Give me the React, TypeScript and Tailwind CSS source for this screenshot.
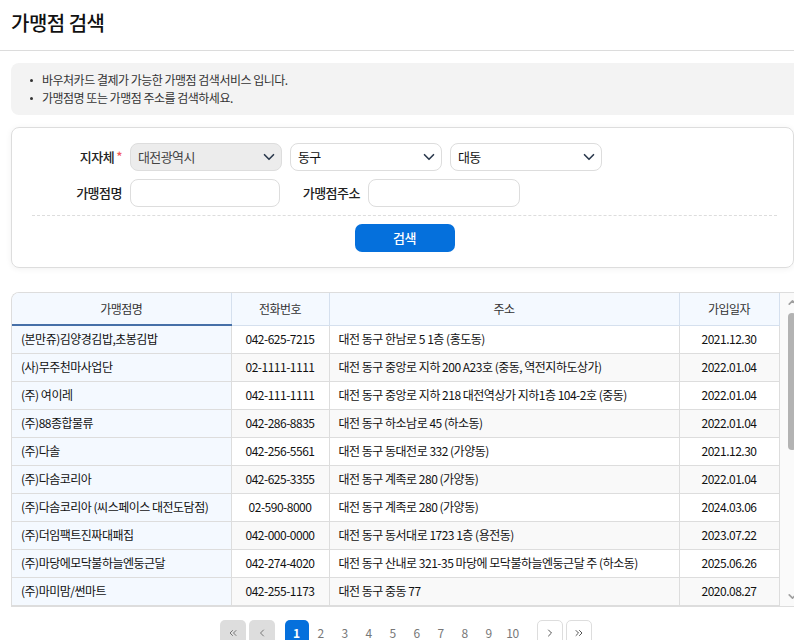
import { ChevronDown, ChevronLeft, ChevronRight, ChevronsLeft, ChevronsRight, ChevronUp } from "lucide-react";

const rows = [
  ["(본만쥬)김양경김밥,초봉김밥", "042-625-7215", "대전 동구 한남로 5 1층 (홍도동)", "2021.12.30"],
  ["(사)무주천마사업단", "02-1111-1111", "대전 동구 중앙로 지하 200 A23호 (중동, 역전지하도상가)", "2022.01.04"],
  ["(주) 여이레", "042-111-1111", "대전 동구 중앙로 지하 218 대전역상가 지하1층 104-2호 (중동)", "2022.01.04"],
  ["(주)88종합물류", "042-286-8835", "대전 동구 하소남로 45 (하소동)", "2022.01.04"],
  ["(주)다솔", "042-256-5561", "대전 동구 동대전로 332 (가양동)", "2021.12.30"],
  ["(주)다솜코리아", "042-625-3355", "대전 동구 계족로 280 (가양동)", "2022.01.04"],
  ["(주)다솜코리아 (씨스페이스 대전도담점)", "02-590-8000", "대전 동구 계족로 280 (가양동)", "2024.03.06"],
  ["(주)더임팩트진짜대패집", "042-000-0000", "대전 동구 동서대로 1723 1층 (용전동)", "2023.07.22"],
  ["(주)마당에모닥불하늘엔둥근달", "042-274-4020", "대전 동구 산내로 321-35 마당에 모닥불하늘엔둥근달 주 (하소동)", "2025.06.26"],
  ["(주)마미맘/썬마트", "042-255-1173", "대전 동구 중동 77", "2020.08.27"],
];

function Select({ label, disabled }: { label: string; disabled?: boolean }) {
  return (
    <div
      className={`w-[152px] h-[28px] flex items-center justify-between pl-[7px] pr-[3px] border border-[#dddddd] rounded-[8px] text-[13px] tracking-[-0.6px] ${
        disabled ? "bg-[#ececec] text-[#444444]" : "bg-white text-[#111111]"
      }`}
    >
      <span>{label}</span>
      <ChevronDown className="w-[18px] h-[18px] text-[#2b3a4d]" strokeWidth={2.2} />
    </div>
  );
}

function PageButton({ children, filled }: { children: React.ReactNode; filled?: boolean }) {
  return (
    <div
      className={`w-[26px] h-[26px] flex items-center justify-center rounded-[5px] ${
        filled ? "bg-[#dddddd] text-[#777777]" : "bg-white border border-[#dddddd] text-[#555555]"
      }`}
    >
      {children}
    </div>
  );
}

export default function App() {
  return (
    <div
      className="h-[640px] overflow-hidden bg-white text-[#111111]"
      style={{ fontFamily: '"Noto Sans CJK KR", "Noto Sans", sans-serif' }}
    >
      <header className="h-[51px] flex items-center pl-[11px] border-b border-[#dcdcdc]">
        <h1 className="text-[20px] font-medium leading-none pb-[4px] tracking-[-0.5px]">가맹점 검색</h1>
      </header>

      <div className="pl-[11px] pt-3">
        <ul className="h-[52px] flex flex-col justify-center pl-[19px] bg-[#f3f3f3] rounded-l-[8px] text-[12px] leading-[18px] tracking-[-0.5px] text-[#333333]">
          <li className="flex items-center gap-[9px]">
            <span className="w-[3px] h-[3px] rounded-full bg-[#333333]" />
            바우처카드 결제가 가능한 가맹점 검색서비스 입니다.
          </li>
          <li className="flex items-center gap-[9px]">
            <span className="w-[3px] h-[3px] rounded-full bg-[#333333]" />
            가맹점명 또는 가맹점 주소를 검색하세요.
          </li>
        </ul>

        <section className="mt-3 h-[141px] pt-[15px] pr-[16px] pl-[20px] border border-[#dddddd] rounded-[8px] shadow-[0_1px_6px_rgba(0,0,0,0.06)]">
          <div className="flex items-center">
            <label className="w-[90px] text-right text-[13px] font-medium tracking-[-0.5px] text-[#222222]">
              지자체<span className="text-[#f25c5c] ml-[2px]">*</span>
            </label>
            <div className="ml-[8px] flex gap-[8px]">
              <Select label="대전광역시" disabled />
              <Select label="동구" />
              <Select label="대동" />
            </div>
          </div>
          <div className="flex items-center mt-[8px]">
            <label className="w-[90px] text-right text-[13px] font-medium tracking-[-0.5px] text-[#222222]">가맹점명</label>
            <div className="ml-[8px] w-[150px] h-[28px] border border-[#dddddd] rounded-[8px]" />
            <label className="w-[80px] text-right text-[13px] font-medium tracking-[-0.5px] text-[#222222]">가맹점주소</label>
            <div className="ml-[8px] w-[152px] h-[28px] border border-[#dddddd] rounded-[8px]" />
          </div>
          <div className="mt-[8px] border-t border-dashed border-[#dddddd]" />
          <div className="mt-[8px] flex justify-center">
            <button type="button" className="w-[100px] h-[28px] rounded-[7px] bg-[#0570dc] text-white text-[13px] font-medium tracking-[-0.5px]">
              검색
            </button>
          </div>
        </section>

        <section className="mt-[24px] flex h-[315px] border-t border-b border-l border-[#dddddd] rounded-tl-[8px] overflow-hidden">
          <table className="w-[767px] table-fixed border-collapse text-[12px] tracking-[-0.5px] self-start">
            <colgroup>
              <col className="w-[219px]" />
              <col className="w-[98px]" />
              <col className="w-[350px]" />
              <col className="w-[100px]" />
            </colgroup>
            <thead>
              <tr className="h-[32px] bg-[#f4f9ff] text-[#333333] font-normal">
                <th className="font-normal border-b-2 border-b-[#4670a8]">가맹점명</th>
                <th className="font-normal border-l border-b border-[#d5e0ee]">전화번호</th>
                <th className="font-normal border-l border-b border-[#d5e0ee]">주소</th>
                <th className="font-normal border-l border-b border-r border-[#d5e0ee]">가입일자</th>
              </tr>
            </thead>
            <tbody>
              {rows.map((row, i) => (
                <tr key={row[0]} className={`h-[28px] border-b border-[#dddddd] ${i % 2 ? "bg-[#f9f9f9]" : "bg-white"}`}>
                  <td className="px-[9px] bg-[#f4f9ff] truncate">{row[0]}</td>
                  <td className="text-center border-l border-[#dddddd]">{row[1]}</td>
                  <td className="px-[9px] border-l border-[#dddddd] truncate">{row[2]}</td>
                  <td className="text-center border-l border-r border-[#dddddd]">{row[3]}</td>
                </tr>
              ))}
            </tbody>
          </table>
          <div className="flex-1 flex flex-col items-center pl-[6px] bg-[#fafafa]">
            <ChevronUp className="w-[13px] h-[13px] mt-[3px] text-[#a0a0a0]" strokeWidth={3} />
            <div className="mt-[4px] w-[8px] h-[137px] rounded-full bg-[#b3b3b3]" />
            <div className="flex-1" />
            <ChevronDown className="w-[13px] h-[13px] mb-[3px] text-[#a0a0a0]" strokeWidth={3} />
          </div>
        </section>

        <nav className="mt-[13px] flex items-center justify-center pl-[6px] text-[12px] text-[#777777]">
          <div className="flex gap-[3px] mr-[10px]">
            <PageButton filled><ChevronsLeft className="w-[12px] h-[12px]" /></PageButton>
            <PageButton filled><ChevronLeft className="w-[12px] h-[12px]" /></PageButton>
          </div>
          <div className="w-[24px] h-[26px] flex items-center justify-center rounded-[5px] bg-[#0570dc] text-white font-bold">1</div>
          {[2, 3, 4, 5, 6, 7, 8, 9, 10].map((n) => (
            <div key={n} className="w-[24px] h-[26px] flex items-center justify-center tracking-[-0.5px]">{n}</div>
          ))}
          <div className="flex gap-[3px] ml-[12px]">
            <PageButton><ChevronRight className="w-[12px] h-[12px]" /></PageButton>
            <PageButton><ChevronsRight className="w-[12px] h-[12px]" /></PageButton>
          </div>
        </nav>
      </div>
    </div>
  );
}
